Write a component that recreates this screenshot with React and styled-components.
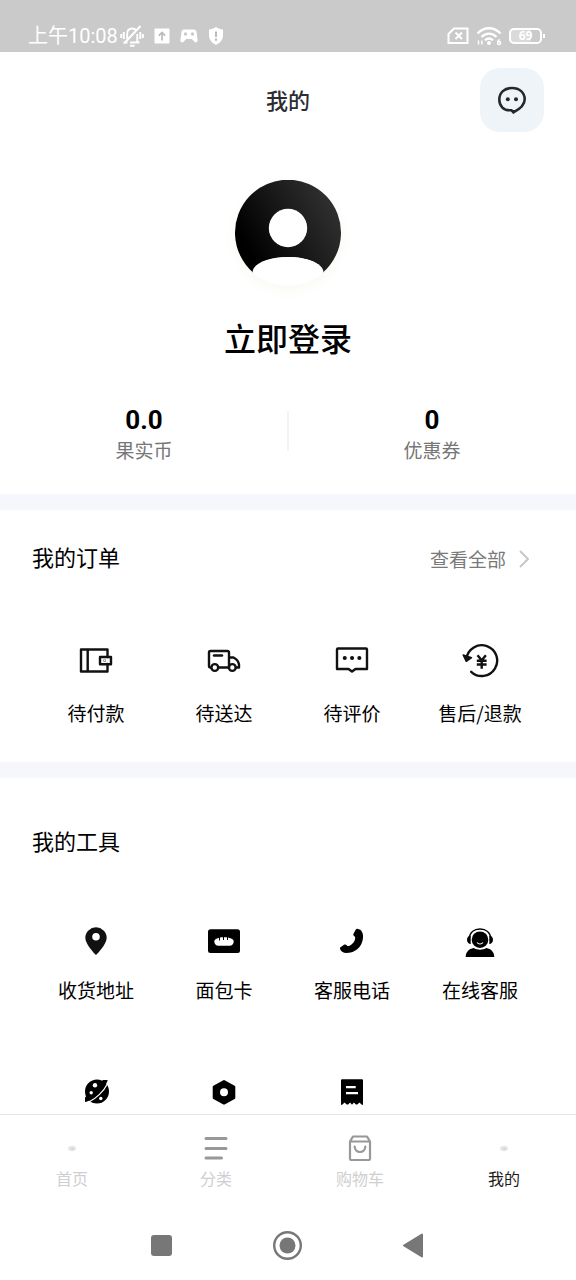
import React from 'react';
import styled, { createGlobalStyle } from 'styled-components';

const GlobalStyle = createGlobalStyle`
  *, *::before, *::after { box-sizing: border-box; }
  body {
    margin: 0;
    background: #fff;
    color: #000;
    font-family: "Noto Sans CJK SC", sans-serif;
  }
  h1, h2, p, ul, dl, dd, dt { margin: 0; padding: 0; }
  button { border: 0; padding: 0; background: none; font: inherit; color: inherit; cursor: pointer; }
  a { color: inherit; text-decoration: none; }
  svg { display: block; flex: none; }
`;

const Screen = styled.div`
  display: flex;
  flex-direction: column;
  height: 100vh;
`;

const StatusBar = styled.div`
  flex: none;
  display: flex;
  justify-content: space-between;
  height: 52px;
  padding: 20px 30px 0 28px;
  background: #cacaca;
  color: #fff;
`;

const StatusGroup = styled.div`
  display: flex;
  align-items: center;
  height: 32px;
  gap: ${(p) => p.$gap}px;
`;

const Clock = styled.span`
  margin-right: -8px;
  font-family: Roboto, "Noto Sans CJK SC", sans-serif;
  font-size: 20px;
  font-weight: 400;
  line-height: 32px;
`;

const Content = styled.main`
  flex: 1;
  min-height: 0;
  overflow-y: auto;
  scrollbar-width: none;
`;

const Header = styled.header`
  display: grid;
  grid-template-columns: 1fr auto 1fr;
  align-items: center;
  padding: 16px 32px;
`;

const PageTitle = styled.h1`
  grid-column: 2;
  padding-bottom: 2px;
  font-size: 22px;
  font-weight: 500;
  line-height: 32px;
  color: #2b2d33;
`;

const MessageButton = styled.button`
  justify-self: end;
  display: grid;
  place-items: center;
  width: 64px;
  height: 64px;
  border-radius: 20px;
  background: #eff4f8;
  color: #26292c;
`;

const Profile = styled.section`
  display: flex;
  flex-direction: column;
  align-items: center;
  padding-top: 32px;
`;

const Avatar = styled.div`
  width: 106px;
  height: 106px;
  border-radius: 50%;
  box-shadow: 0 4px 12px rgba(170, 160, 90, 0.08);
`;

const LoginButton = styled.button`
  margin-top: 31px;
  font-size: 32px;
  font-weight: 500;
  line-height: 40px;
`;

const Stats = styled.dl`
  display: flex;
  align-items: flex-start;
  padding: 48px 0 29px;
`;

const Stat = styled.div`
  flex: 1;
  display: flex;
  flex-direction: column-reverse;
  text-align: center;
  line-height: 30px;
`;

const StatValue = styled.dd`
  font-family: Roboto, sans-serif;
  font-size: 26px;
  font-weight: 700;
`;

const StatLabel = styled.dt`
  font-size: 19px;
  color: #767676;
`;

const StatDivider = styled.span`
  width: 2px;
  height: 40px;
  margin: 6px -1px 0;
  background: #f3f3f3;
`;

const Section = styled.section`
  border-top: 16px solid #f5f7fc;
  padding: ${(p) => p.$top}px 32px 35px;
`;

const SectionHead = styled.div`
  display: flex;
  align-items: flex-start;
  justify-content: space-between;
  height: 34px;
`;

const SectionTitle = styled.h2`
  font-size: 22px;
  font-weight: 400;
  line-height: 32px;
`;

const MoreLink = styled.a`
  display: flex;
  align-items: center;
  gap: 13px;
  padding: 5px 15px 0 0;
  font-size: 19px;
  line-height: 28px;
  color: #7a7a7a;
`;

const Shortcuts = styled.ul`
  display: grid;
  grid-template-columns: repeat(4, 1fr);
  row-gap: 68px;
  margin-top: ${(p) => p.$top}px;
  list-style: none;
`;

const Shortcut = styled.a`
  display: flex;
  flex-direction: column;
  align-items: center;
  gap: ${(p) => p.$gap}px;
  font-size: 19px;
  line-height: 28px;
  white-space: nowrap;
`;

const TabBar = styled.nav`
  flex: none;
  display: grid;
  grid-template-columns: repeat(4, 1fr);
  height: 96px;
  padding-top: 19px;
  border-top: 1px solid #e6e6e6;
  background: #fff;
`;

const Tab = styled.a`
  display: flex;
  flex-direction: column;
  align-items: center;
  gap: 4px;
  font-size: 16px;
  line-height: 24px;
  color: ${(p) => (p.$active ? '#1c1c1c' : '#cfcfcf')};
`;

const SystemNav = styled.nav`
  flex: none;
  display: grid;
  grid-template-columns: repeat(3, 1fr);
  justify-items: center;
  align-items: center;
  height: 70px;
  padding: 0 99px;
  background: #fff;
  color: #777;
`;

function Icon({ w = 40, h = w, children, ...rest }) {
  return (
    <svg width={w} height={h} viewBox={`0 0 ${w} ${h}`} fill="none" aria-hidden="true" {...rest}>
      {children}
    </svg>
  );
}

const line = { stroke: '#111', strokeWidth: 2.4, strokeLinecap: 'round', strokeLinejoin: 'round' };

const MutedBell = () => (
  <Icon w={24} h={22} stroke="#fff" strokeWidth="1.9">
    <path d="M3.500 17.500h4M10 17.500h9.500M7.200 14V9c0-3.500 2-5.500 5-5.500 1.800 0 3.300.8 4.200 2M17.300 9v7l1.500 2M20.500 1 4 18.500" />
    <path d="M10 20.300q2.300 1.200 4.600 0M3.800 7v7M1.200 9v4M20.300 7v7M22.900 9v4" />
  </Icon>
);
const UploadBadge = () => (
  <Icon w={16}>
    <rect x="0.500" y="0.500" width="15" height="15" rx="1" fill="#fff" />
    <path d="M8 12.500V4.500M4.800 7.600 8 4.400l3.200 3.200" stroke="#bbb" strokeWidth="1.700" />
  </Icon>
);
const Gamepad = () => (
  <Icon w={18} h={16}>
    <path d="M4 1.500h10c1.500 0 2.300 1 2.500 2.400L17.600 12c.2 2.400-2 3.200-3.400 1.600L11.800 11H6.200l-2.400 2.600C2.400 15.200.2 14.400.4 12l1.100-8.100C1.700 2.500 2.500 1.500 4 1.500z" fill="#fff" />
    <circle cx="5.500" cy="6" r="1.700" fill="#cacaca" />
    <circle cx="12.500" cy="6" r="1.700" fill="#cacaca" />
  </Icon>
);
const Shield = () => (
  <Icon w={16} h={20}>
    <path d="M8 1c2 1.500 4.500 2.200 7 2.400v6.200c0 4.400-3 7.400-7 9.400-4-2-7-5-7-9.400V3.400C3.500 3.200 6 2.500 8 1z" fill="#fff" />
    <path d="M8 5.500v5.500M8 12.500v2.200" stroke="#bbb" strokeWidth="2" />
  </Icon>
);
const NoSim = () => (
  <Icon w={22} h={18} stroke="#fff" strokeWidth="2">
    <path d="M7 1.500h13.500v14.500h-19V7z" />
    <path d="m8.500 5.500 6.500 6.500M15 5.500 8.500 12" />
  </Icon>
);
const Wifi = () => (
  <Icon w={26} h={20} stroke="#fff" strokeWidth="2.400">
    <path d="M1.500 7.500c6.500-7 16.500-7 23 0M5.500 11c4.500-4.500 10.500-4.500 15 0M9 14.300c2.500-2.300 5.500-2.300 8 0" />
    <circle cx="13" cy="17" r="2" fill="#fff" stroke="none" />
    <path d="M2.500 18.500v-4M5.800 14.500v4" strokeWidth="1.500" />
    <path d="M23.800 13.300c-1.500.8-2.300 2-2.300 3.600" strokeWidth="1.500" />
    <circle cx="23" cy="17" r="1.500" strokeWidth="1.500" />
  </Icon>
);

const Battery = styled.span`
  display: flex;
  align-items: center;
  justify-content: center;
  width: 33px;
  height: 16px;
  border: 2px solid #fff;
  border-radius: 5px;
  margin-right: 4px;
  background: linear-gradient(90deg, #dadada 69%, transparent 69%);
  font-family: "Open Sans", sans-serif;
  font-size: 12px;
  font-weight: 700;
  line-height: 12px;
  position: relative;
  &::after {
    content: "";
    position: absolute;
    right: -5px;
    top: 4px;
    width: 2px;
    height: 4px;
    background: #fff;
  }
`;

const ChatBubble = () => (
  <Icon w={32}>
    <path d="M15.500 26.300h-2C7.500 26.300 3.300 22 3.300 15.600 3.300 8.500 8.500 4 16 4s12.700 4.500 12.700 11.300c0 5-4.200 9.500-11.200 13z" stroke="currentColor" strokeWidth="2.600" />
    <path d="M15 26h5l-3 3.500z" fill="currentColor" />
    <circle cx="11.800" cy="15.300" r="2" fill="currentColor" />
    <circle cx="20" cy="15.300" r="2" fill="currentColor" />
  </Icon>
);
const AvatarArt = () => (
  <Icon w={106}>
    <defs>
      <linearGradient id="avatarFill" x1="0.100" y1="0.700" x2="0.900" y2="0.300">
        <stop offset="0" stopColor="#000" />
        <stop offset="1" stopColor="#2e2e2e" />
      </linearGradient>
    </defs>
    <path d="M18 92.500A53 53 0 1 1 88 92.500C88 84 72 77 53 77S18 84 18 92.500z" fill="url(#avatarFill)" />
    <path d="M17.500 91.500C19 83 34 77 53 77s34 6 35.500 14.500A53 53 0 0 1 17.500 91.500z" fill="#fff" />
    <circle cx="53" cy="48" r="19.200" fill="#fff" />
  </Icon>
);
const Chevron = () => (
  <Icon w={10} h={18}>
    <path d="m1 1 8 8-8 8" stroke="#c8c8c8" strokeWidth="2" />
  </Icon>
);

const Wallet = () => (
  <Icon {...line}>
    <path d="M31.500 17V9.500H5v22h26.500V24M11.700 9.500v22" />
    <rect x="24" y="17" width="11" height="7.200" />
    <circle cx="28.700" cy="20.600" r="0.200" />
  </Icon>
);
const Truck = () => (
  <Icon {...line}>
    <path d="M7 27.500H6.500A1.500 1.500 0 0 1 5 26V12.500A1.500 1.500 0 0 1 6.500 11H23.500A1.500 1.500 0 0 1 25 12.500V27.500M14.500 27.500H24.500M25 17.500h4.500c3 1.500 5 4 5.500 7v3h-3" />
    <circle cx="10.800" cy="27.500" r="3.400" />
    <circle cx="28.300" cy="27.500" r="3.400" />
    <path d="M10 15.500h8" />
  </Icon>
);
const Review = () => (
  <Icon {...line}>
    <path d="M6 8.500h28a1 1 0 0 1 1 1V29H23.500L20 31.500 16.500 29H5V9.500a1 1 0 0 1 1-1z" />
    <path d="M12.700 18h.1M20 18h.1M27.300 18h.1" strokeWidth="4" />
  </Icon>
);
const Refund = () => (
  <Icon {...line}>
    <path d="M6.500 18.500A15.400 15.400 0 1 1 11.200 31.800" />
    <path d="M3.200 15 6.300 21.300 11.500 17.600z" fill="#111" strokeWidth="1.500" />
    <path d="m17.500 15.300 4.200 5 4.200-5M21.700 20.300v8.500M16.800 20.800h9.800M16.800 24.500h9.800" strokeLinecap="butt" />
  </Icon>
);
const Pin = () => (
  <Icon>
    <path fillRule="evenodd" d="M20 34c-2-1.800-10.700-11-10.700-17.200a10.700 10.500 0 0 1 21.400 0C30.700 23 22 32.200 20 34zM20 12a3.800 3.800 0 1 0 0 7.600 3.800 3.800 0 0 0 0-7.600z" fill="#111" />
  </Icon>
);
const BreadCard = () => (
  <Icon>
    <rect x="4" y="8.300" width="32" height="23.700" rx="2.500" fill="#000" />
    <path d="M10.300 20.500c0-2.600 4-4.300 9.700-4.300s9.700 1.700 9.700 4.300-1.700 4.200-4 4.200H14.300c-2.300 0-4-1.600-4-4.200z" fill="#fff" />
    <path d="M15.500 15.500v4M19.500 15.500v3.500M23.500 15.500v3.500" stroke="#000" strokeWidth="1" />
  </Icon>
);
const Phone = () => (
  <Icon>
    <path d="M25.300 7.700c2.300.3 4 1.600 4.700 3.300 2 3.500 1 9.500-1.500 13.500-3 4.800-8.500 7.500-13.800 7.500-3.700 0-6-1.800-6.700-4.200-.2-1 .3-1.500 1.200-2l2.800-2c1-.6 1.900-.4 2.700.4.700.8 1.500 1.100 2.500.7 3.300-1.300 5.700-4.200 6-7.600.1-1-.3-1.500-1-2.200-1-.8-1.200-1.500-.7-2.400l2.300-4.100c.3-.6.800-1 1.500-.9z" fill="#000" />
  </Icon>
);
const Agent = () => (
  <Icon>
    <circle cx="20" cy="18.700" r="8.300" fill="#000" />
    <path d="M9.200 17.500C9.700 11.500 14 8 20 8s10.300 3.500 10.800 9.500" stroke="#000" strokeWidth="1.500" />
    <path d="M10.700 14.500v8.500C8.500 23 7 21.200 7 18.800s1.500-4.100 3.700-4.300zM29.300 14.500v8.500c2.200 0 3.700-1.800 3.700-4.200s-1.500-4.100-3.700-4.300z" fill="#000" />
    <path d="M17 21.500c1.500 2 4.500 2 6 0" stroke="#fff" strokeWidth="1.100" />
    <path d="M5.700 36c0-5 3.300-8.300 8-9 3.500 2.200 9.100 2.200 12.600 0 4.700.7 8 4 8 9z" fill="#000" />
  </Icon>
);
const Planet = () => (
  <Icon>
    <circle cx="21" cy="19.500" r="12" fill="#000" />
    <path d="M9 25.500V30c6.500-.5 21-14.500 22.700-22H27" fill="#000" />
    <path d="M12.800 30C20 26.500 28 19 31.300 12" stroke="#fff" strokeWidth="1.200" />
    <circle cx="19" cy="13.300" r="2.200" fill="#fff" />
    <circle cx="15.200" cy="20.700" r="1.700" fill="#fff" />
    <circle cx="24.800" cy="26.500" r="1.700" fill="#fff" />
  </Icon>
);
const HexNut = () => (
  <Icon>
    <path d="M20 9.300 30 14.800v11L20 31.300l-10-5.500v-11z" fill="#000" stroke="#000" strokeWidth="2.600" strokeLinejoin="round" />
    <circle cx="20" cy="20.300" r="4" fill="#fff" />
  </Icon>
);
const Receipt = () => (
  <Icon>
    <path d="M10 7.300h20a1 1 0 0 1 1 1V33l-1.500-.4-2-2-2.200 2-1.400 0-2-2-1.900 2.200-1.900-2.200-2 2-1.400 0-2.200-2-2 2L9 33V8.300a1 1 0 0 1 1-1z" fill="#000" />
    <path d="M14 15.200h9.700M14 21.200h12" stroke="#fff" strokeWidth="2.200" />
  </Icon>
);

const DotIcon = () => (
  <Icon w={28}>
    <ellipse cx="14" cy="14.500" rx="4" ry="2.800" fill="#e8e8e8" />
    <ellipse cx="14.500" cy="14.800" rx="2" ry="1.300" fill="#d8d8d8" />
  </Icon>
);
const ListIcon = () => (
  <Icon w={28} stroke="#989898" strokeWidth="3" strokeLinecap="round">
    <path d="M4 4.500h20M4 14.500h20M4 24h15.500" />
  </Icon>
);
const BagIcon = () => (
  <Icon w={28} stroke="#989898" strokeWidth="2.200" strokeLinejoin="round" strokeLinecap="round">
    <path d="M4 7.500 7 2.500h14l3 5V25a1 1 0 0 1-1 1H5a1 1 0 0 1-1-1zM4 7.500h20" />
    <path d="M8.700 12.500c0 3.200 2.300 5.500 5.300 5.500s5.300-2.300 5.300-5.500" />
  </Icon>
);

const orders = [
  { label: '待付款', Art: Wallet },
  { label: '待送达', Art: Truck },
  { label: '待评价', Art: Review },
  { label: '售后/退款', Art: Refund },
];
const tools = [
  { label: '收货地址', Art: Pin },
  { label: '面包卡', Art: BreadCard },
  { label: '客服电话', Art: Phone },
  { label: '在线客服', Art: Agent },
  { Art: Planet },
  { Art: HexNut },
  { Art: Receipt },
];
const tabs = [
  { label: '首页', Art: DotIcon },
  { label: '分类', Art: ListIcon },
  { label: '购物车', Art: BagIcon },
  { label: '我的', Art: DotIcon, active: true },
];

function ShortcutGrid({ items, top, gap }) {
  return (
    <Shortcuts $top={top}>
      {items.map(({ label, Art }, i) => (
        <li key={i}>
          <Shortcut href="#" $gap={gap}>
            <Art />
            {label && <span>{label}</span>}
          </Shortcut>
        </li>
      ))}
    </Shortcuts>
  );
}

export default function App() {
  return (
    <Screen>
      <GlobalStyle />
      <StatusBar>
        <StatusGroup $gap={10}>
          <Clock>上午10:08</Clock>
          <MutedBell />
          <UploadBadge />
          <Gamepad />
          <Shield />
        </StatusGroup>
        <StatusGroup $gap={7}>
          <NoSim />
          <Wifi />
          <Battery>69</Battery>
        </StatusGroup>
      </StatusBar>
      <Content>
        <Header>
          <PageTitle>我的</PageTitle>
          <MessageButton type="button"><ChatBubble /></MessageButton>
        </Header>
        <Profile>
          <Avatar><AvatarArt /></Avatar>
          <LoginButton type="button">立即登录</LoginButton>
        </Profile>
        <Stats>
          <Stat>
            <StatLabel>果实币</StatLabel>
            <StatValue>0.0</StatValue>
          </Stat>
          <StatDivider />
          <Stat>
            <StatLabel>优惠券</StatLabel>
            <StatValue>0</StatValue>
          </Stat>
        </Stats>
        <Section $top={30}>
          <SectionHead>
            <SectionTitle>我的订单</SectionTitle>
            <MoreLink href="#">查看全部<Chevron /></MoreLink>
          </SectionHead>
          <ShortcutGrid items={orders} top={66} gap={19} />
        </Section>
        <Section $top={46}>
          <SectionHead>
            <SectionTitle>我的工具</SectionTitle>
          </SectionHead>
          <ShortcutGrid items={tools} top={63} gap={15} />
        </Section>
      </Content>
      <TabBar>
        {tabs.map(({ label, Art, active }) => (
          <Tab key={label} href="#" $active={active}>
            <Art />
            <span>{label}</span>
          </Tab>
        ))}
      </TabBar>
      <SystemNav>
        <button type="button" aria-label="最近任务">
          <Icon w={30}><rect x="4" y="5" width="21" height="21" rx="3" fill="currentColor" /></Icon>
        </button>
        <button type="button" aria-label="主屏幕">
          <Icon w={30}>
            <circle cx="14.500" cy="15.500" r="13.300" stroke="currentColor" strokeWidth="2.400" />
            <circle cx="14.500" cy="15.500" r="8" fill="currentColor" />
          </Icon>
        </button>
        <button type="button" aria-label="返回">
          <Icon w={30}><path d="M23 4.500v22L5 15.500z" fill="currentColor" stroke="currentColor" strokeWidth="2" strokeLinejoin="round" /></Icon>
        </button>
      </SystemNav>
    </Screen>
  );
}
